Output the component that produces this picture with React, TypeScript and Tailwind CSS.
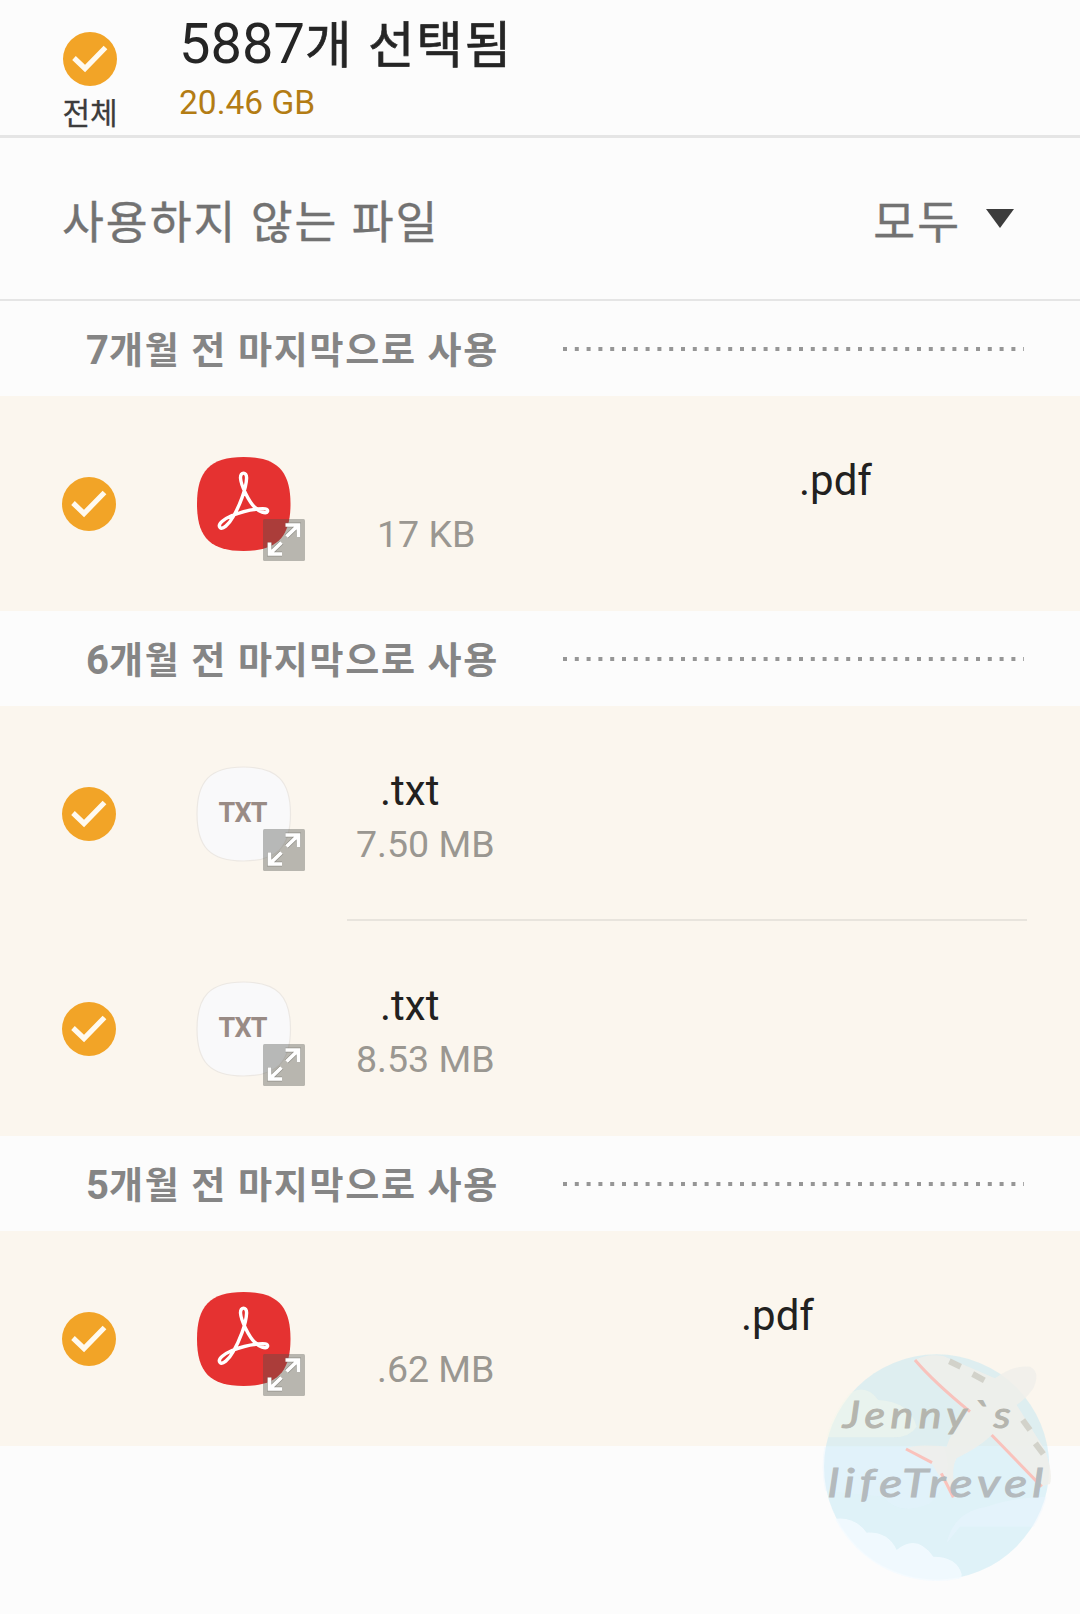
import React from 'react';

interface FileItem {
  id: number;
  kind: 'pdf' | 'txt';
  name: string;
  size: string;
  nameClass: string;
  sizeClass: string;
}

interface FileGroup {
  id: number;
  months: number;
  files: FileItem[];
}

const groups: FileGroup[] = [
  {
    id: 7,
    months: 7,
    files: [{ id: 1, kind: 'pdf', name: '.pdf', size: '17 KB', nameClass: 'pl-[452px]', sizeClass: 'pl-[30px]' }],
  },
  {
    id: 6,
    months: 6,
    files: [
      { id: 2, kind: 'txt', name: '.txt', size: '7.50 MB', nameClass: 'pl-[33px]', sizeClass: 'pl-[9px]' },
      { id: 3, kind: 'txt', name: '.txt', size: '8.53 MB', nameClass: 'pl-[33px]', sizeClass: 'pl-[9px]' },
    ],
  },
  {
    id: 5,
    months: 5,
    files: [{ id: 4, kind: 'pdf', name: '.pdf', size: '.62 MB', nameClass: 'pl-[394px]', sizeClass: 'pl-[30px]' }],
  },
];

const CheckCircle = () => (
  <svg viewBox="0 0 54 54" className="w-[54px] h-[54px] shrink-0">
    <circle cx="27" cy="27" r="27" fill="#f2a427" />
    <path d="M11 26 L22 36.5 L42.5 15.5" fill="none" stroke="#fffaf0" strokeWidth="5.2" />
  </svg>
);

const ExpandBadge = () => (
  <svg viewBox="0 0 42 42" className="absolute left-[66px] top-[62px] w-[42px] h-[42px]">
    <rect width="42" height="42" rx="1.5" fill="#4d504a" fillOpacity="0.38" />
    <g fill="none" stroke="#6b6b66" strokeOpacity="0.5" strokeWidth="5">
      <path d="M23.5 17.5 L35 6.5 M22.5 6 H35.5 V18" />
      <path d="M18.5 23.5 L7 34.5 M6.5 23.5 V35 H19" />
    </g>
    <g fill="none" stroke="#fff" strokeWidth="3.7">
      <path d="M23.5 17.5 L35 6.5 M22.5 6 H35.5 V18" />
      <path d="M18.5 23.5 L7 34.5 M6.5 23.5 V35 H19" />
    </g>
  </svg>
);

const SQUIRCLE = 'M46.5 0 C80 0 93.5 14 93.5 47 C93.5 80 80 94 46.5 94 C13 94 0 80 0 47 C0 14 13 0 46.5 0 Z';

const FileIcon = ({ kind }: { kind: 'pdf' | 'txt' }) => (
  <div className="relative w-[94px] h-[94px] shrink-0">
    <svg viewBox="0 0 94 94" className="w-[94px] h-[94px] overflow-visible">
      {kind === 'pdf' ? (
        <>
          <path d={SQUIRCLE} fill="#e53231" />
          <path
            d="M23 70.5 C20 67 28 61.5 35 58.5 C45 54.5 55 52.5 61 52 C67 51.5 71.5 51.5 70.5 54.5 C69 57.5 62 54.5 57.5 50 C52 44.5 44 29 43.5 21 C43.3 14.5 49.7 14.5 49.6 21 C49.3 32 42 50 36 60 C31.5 68 25.5 73 23 70.5 Z"
            fill="none"
            stroke="#fff"
            strokeWidth="3.4"
            strokeLinejoin="round"
          />
        </>
      ) : (
        <>
          <path d={SQUIRCLE} fill="#f9f9fa" stroke="#ece8e3" strokeWidth="1.2" />
          <text x="46" y="55" textAnchor="middle" fontFamily="Roboto" fontWeight="700" fontSize="27" fill="#998b85" textLength="49">
            TXT
          </text>
        </>
      )}
    </svg>
    <ExpandBadge />
  </div>
);

const GroupHeader = ({ months }: { months: number }) => (
  <div className="h-[95px] flex items-center pl-[86px] pr-[56px]">
    <h3 className="w-[477px] pt-[5px] text-[40px] leading-[48px] font-bold text-[#858585] whitespace-nowrap">
      {months}
      <span className="text-[37px] tracking-[1.7px]">개월 전 마지막으로 사용</span>
    </h3>
    <svg viewBox="0 0 461 4" className="w-[461px] h-1">
      <line x1="0" y1="2" x2="461" y2="2" stroke="#969696" strokeWidth="4" strokeDasharray="4 7.8" />
    </svg>
  </div>
);

const FileRow = ({ file, divider }: { file: FileItem; divider: boolean }) => (
  <div className="h-[215px] flex bg-[#fbf6ee]">
    <div className="flex items-center pl-[62px] gap-[81px]">
      <CheckCircle />
      <FileIcon kind={file.kind} />
    </div>
    <div className={`ml-[56px] w-[680px] pt-[60px] whitespace-nowrap ${divider ? 'border-b-2 border-[#e8e4dd]' : ''}`}>
      <p className={`text-[42px] leading-[50px] text-[#222120] ${file.nameClass}`}>{file.name}</p>
      <p className={`mt-[3px] text-[37.5px] leading-[50px] text-[#9a9791] ${file.sizeClass}`}>{file.size}</p>
    </div>
  </div>
);

const Watermark = () => (
  <svg viewBox="0 0 840 852" className="absolute left-[800px] top-[1330px] w-[280px] h-[284px]">
    <defs>
      <clipPath id="disc">
        <circle cx="410" cy="411" r="342" />
      </clipPath>
    </defs>
    <circle cx="410" cy="411" r="338" fill="#b4e3f3" fillOpacity="0.4" />
    <g clipPath="url(#disc)">
      {/* clouds */}
      <path d="M60 322 V230 Q110 230 130 205 Q190 150 235 210 Q330 215 350 290 Q330 322 280 322 Z" fill="#f3f7ec" fillOpacity="0.5" />
      <path d="M60 350 H430 Q470 440 390 520 Q300 560 250 500 L60 480 Z" fill="#e4f3ff" fillOpacity="0.35" />
      <path d="M440 640 Q460 545 560 530 Q640 500 760 500 V590 H480 Z" fill="#eaf6ff" fillOpacity="0.4" />
      <path d="M60 580 Q150 540 200 608 Q265 605 290 660 Q350 610 400 680 Q470 680 485 732 L480 790 H60 Z" fill="#f3faff" fillOpacity="0.85" />
    </g>
    {/* airplane */}
    <path
      d="M345 90 Q380 70 430 78 L585 145 Q640 105 690 110 Q722 125 700 175 Q680 205 650 225 L735 360 Q760 430 750 462 L720 470 L575 315 Q540 350 470 385 Q450 420 468 490 L455 500 L395 400 L315 360 Q330 340 440 350 Q450 310 505 242 Z"
      fill="#f0eeea"
      fillOpacity="0.85"
    />
    <g fill="none" stroke="#fbbcb6" strokeWidth="9" strokeOpacity="0.9">
      <path d="M345 90 Q400 155 510 245" />
      <path d="M575 315 L725 470" />
      <path d="M318 357 L396 398" />
      <path d="M424 430 L460 502" />
    </g>
    <g stroke="#d2d2ca" strokeWidth="18">
      <path d="M448 94 L482 110" />
      <path d="M518 132 L553 151" />
      <path d="M668 270 L690 300" />
      <path d="M706 340 L730 372" />
    </g>
    <g fontFamily="Lato, sans-serif" fontStyle="italic" fontWeight="400" strokeWidth="3">
      <text x="128" y="294" fontSize="112" letterSpacing="14" textLength="520" lengthAdjust="spacingAndGlyphs" fill="#b5b5ae" stroke="#b5b5ae">
        Jenny`s
      </text>
      <text x="84" y="500" fontSize="116" letterSpacing="12" textLength="660" lengthAdjust="spacingAndGlyphs" fill="#b4babd" stroke="#b4babd">
        lifeTrevel
      </text>
    </g>
  </svg>
);

const App = () => {
  return (
    <div className="relative w-[1080px] h-[1614px] overflow-hidden bg-[#fcfcfc] font-['Roboto','Noto_Sans_CJK_KR',sans-serif]">
      {/* Selection header */}
      <header className="h-[138px] flex border-b-[3px] border-[#e5e5e5] whitespace-nowrap">
        <div className="w-[180px] flex flex-col items-center pt-8">
          <CheckCircle />
          <span className="mt-3 text-[30px] leading-8 text-[#3c3c3c] [-webkit-text-stroke:0.3px_#3c3c3c]">전체</span>
        </div>
        <div className="-ml-px pt-3">
          <h1 className="text-[56px] leading-[64px] text-[#252525]">
            5887<span className="text-[50.5px] tracking-[2px] [-webkit-text-stroke:0.7px_#252525]">개 선택됨</span>
          </h1>
          <p className="mt-[5px] text-[33.5px] leading-10 text-[#b37c14]">20.46 GB</p>
        </div>
      </header>

      {/* Filter bar */}
      <div className="h-[163px] flex items-center justify-between pl-[62px] pr-[66px] border-b-2 border-[#e5e5e5] text-[45.5px] tracking-[2px] text-[#727272] [-webkit-text-stroke:0.4px_#727272]">
        <h2 className="leading-[60px] pt-[10px]">사용하지 않는 파일</h2>
        <div className="flex items-center gap-[25px]">
          <span className="leading-[60px] pt-[10px]">모두</span>
          <svg viewBox="0 0 28 19" className="w-7 h-[19px]">
            <path d="M0 0 H28 L14 19 Z" fill="#3c3c3c" />
          </svg>
        </div>
      </div>

      {groups.map(group => (
        <section key={group.id}>
          <GroupHeader months={group.months} />
          {group.files.map((file, i) => (
            <FileRow key={file.id} file={file} divider={i < group.files.length - 1} />
          ))}
        </section>
      ))}

      <Watermark />
    </div>
  );
};

export default App;
